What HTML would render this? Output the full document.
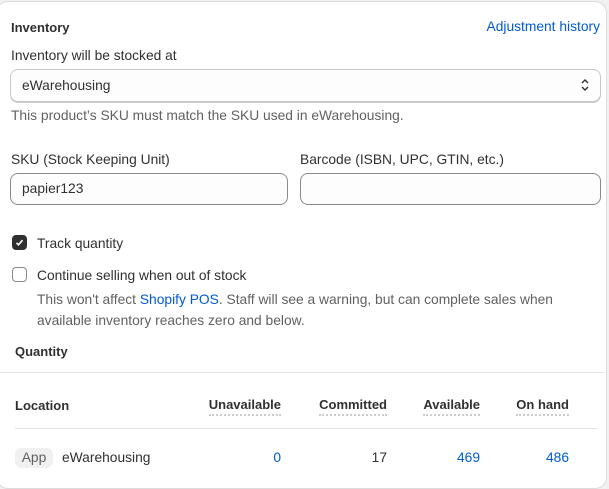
<!DOCTYPE html>
<html><head><style>
body{margin:0;width:609px;height:489px;background:#f1f1f1;font-family:"Liberation Sans",sans-serif;font-size:13.8px;color:#303030;position:relative;overflow:hidden}
.card{position:absolute;left:-4px;top:1px;width:609px;height:486px;background:#fff;border:1px solid #dcdcdc;border-radius:12px}
.a{position:absolute;white-space:nowrap;line-height:16px}
.b{font-weight:bold;font-size:13px;color:#303030}
.blue{color:#005bd3}
.g{color:#616161}
.box{position:absolute;border:1px solid #8a8a8a;border-radius:8px;background:#fdfdfd}
.cb{position:absolute;width:13px;height:13px;border:1px solid #8a8a8a;border-radius:4px;background:#fff}
.th{border-bottom:2px dotted #ccc;padding-bottom:1px;font-weight:bold;font-size:13px}
</style></head><body>
<div class="card"></div>
<div class="a b" style="left:11px;top:20px">Inventory</div>
<div class="a blue" style="right:9px;top:19px">Adjustment history</div>
<div class="a" style="left:11px;top:48px">Inventory will be stocked at</div>
<div class="box" style="left:10px;top:69px;width:589px;height:31px;border-color:#c8c8c8;box-shadow:0 1px 0 #ccc"></div>
<div class="a" style="left:22px;top:78px">eWarehousing</div>
<svg style="position:absolute;left:580px;top:78px" width="10" height="14" viewBox="0 0 10 14"><path d="M2 5 L5 2 L8 5 M2 9 L5 12 L8 9" stroke="#303030" stroke-width="1.4" fill="none"/></svg>
<div class="a g" style="left:11px;top:108px">This product’s SKU must match the SKU used in eWarehousing.</div>
<div class="a" style="left:11px;top:152px">SKU (Stock Keeping Unit)</div>
<div class="a" style="left:300px;top:152px">Barcode (ISBN, UPC, GTIN, etc.)</div>
<div class="box" style="left:10px;top:173px;width:276px;height:30px"></div>
<div class="box" style="left:300px;top:173px;width:299px;height:30px"></div>
<div class="a" style="left:22px;top:181px">papier123</div>
<div class="cb" style="left:12px;top:235px;background:#303030;border-color:#303030"></div>
<svg style="position:absolute;left:14px;top:237px" width="11" height="11" viewBox="0 0 11 11"><path d="M2.5 5.8 L4.5 7.8 L8.5 3.2" stroke="#fff" stroke-width="1.6" fill="none"/></svg>
<div class="a" style="left:37px;top:236px">Track quantity</div>
<div class="cb" style="left:12px;top:267px"></div>
<div class="a" style="left:37px;top:268px">Continue selling when out of stock</div>
<div class="a g" style="left:37px;top:292px">This won't affect <span class="blue">Shopify POS</span>. Staff will see a warning, but can complete sales when</div>
<div class="a g" style="left:37px;top:313px">available inventory reaches zero and below.</div>
<div class="a b" style="left:15px;top:344px">Quantity</div>
<div style="position:absolute;left:0;top:372px;width:604px;height:1px;background:#e3e3e3"></div>
<div class="a b" style="left:15px;top:398px">Location</div>
<div class="a th" style="right:328px;top:397px">Unavailable</div>
<div class="a th" style="right:222px;top:397px">Committed</div>
<div class="a th" style="right:129px;top:397px">Available</div>
<div class="a th" style="right:40px;top:397px">On hand</div>
<div style="position:absolute;left:15px;top:428px;width:582px;height:1px;background:#e3e3e3"></div>
<div class="a g" style="left:15px;top:448px;width:38px;height:20px;line-height:20px;background:#f0f0f0;border-radius:7px;text-align:center">App</div>
<div class="a" style="left:62px;top:450px">eWarehousing</div>
<div class="a blue" style="right:328px;top:450px">0</div>
<div class="a" style="right:222px;top:450px">17</div>
<div class="a blue" style="right:129px;top:450px">469</div>
<div class="a blue" style="right:40px;top:450px">486</div>
</body></html>
